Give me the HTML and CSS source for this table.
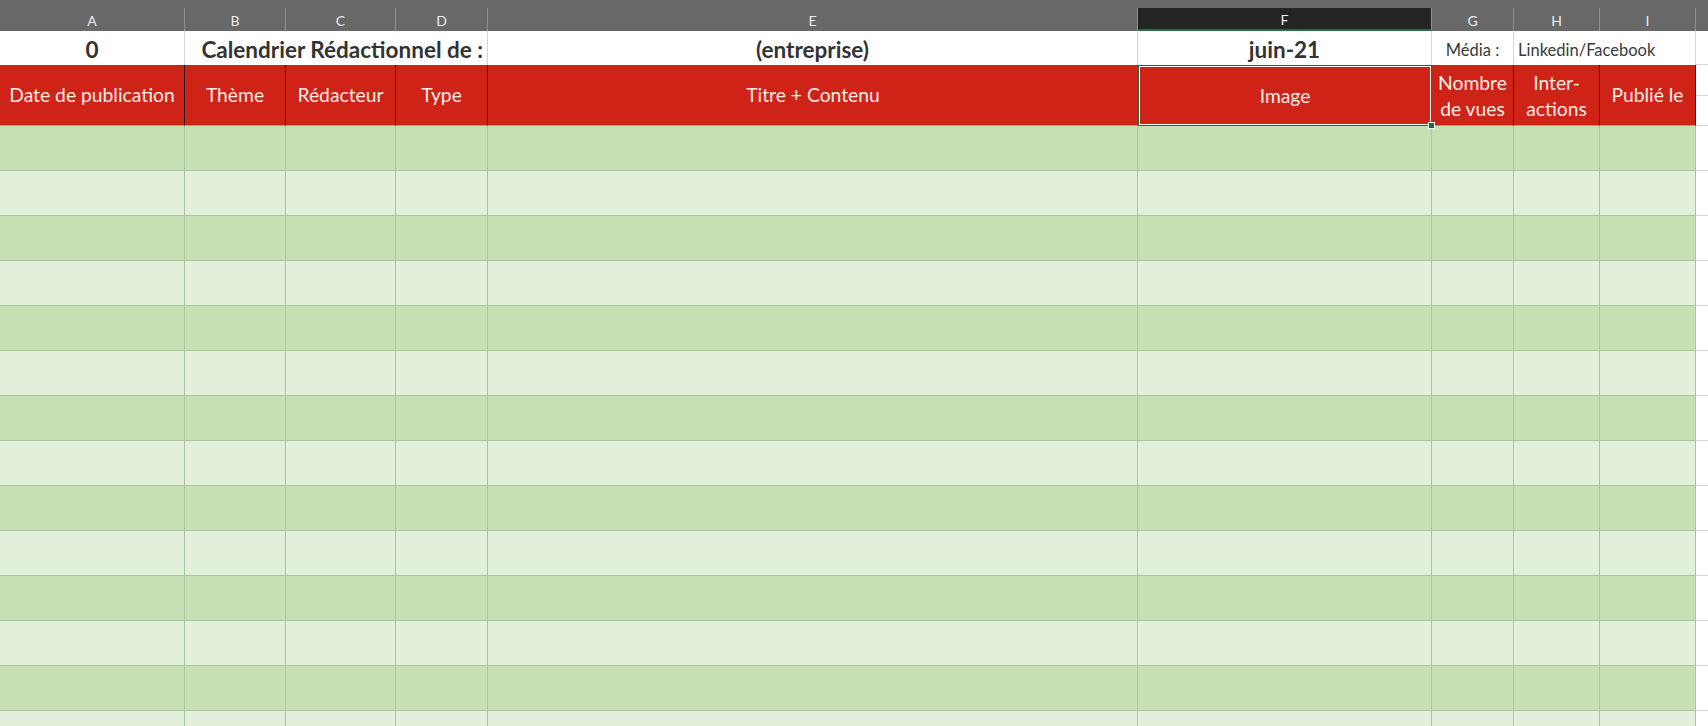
FILE: index.html
```html
<!DOCTYPE html>
<html lang="fr">
<head>
<meta charset="utf-8">
<title>Calendrier Rédactionnel</title>
<link rel="stylesheet" href="styles.css">
</head>
<body>
<div class="sheet">
  <div class="row colhead">
    <div class="ch">A</div>
    <div class="ch">B</div>
    <div class="ch">C</div>
    <div class="ch">D</div>
    <div class="ch">E</div>
    <div class="ch ch-sel">F</div>
    <div class="ch">G</div>
    <div class="ch">H</div>
    <div class="ch">I</div>
    <div class="ch ch-fill"></div>
  </div>

  <div class="row r1">
    <div class="c1 bold center">0</div>
    <div class="c1 bold right span3">Calendrier Rédactionnel de :</div>
    <div class="c1 bold center">(entreprise)</div>
    <div class="c1 bold center">juin-21</div>
    <div class="c1 small center">Média :</div>
    <div class="c1 small left span2">Linkedin/Facebook</div>
    <div class="c1 fill"></div>
  </div>

  <div class="row r2">
    <div class="hd">Date de publication</div>
    <div class="hd">Thème</div>
    <div class="hd">Rédacteur</div>
    <div class="hd">Type</div>
    <div class="hd hd-e">Titre + Contenu</div>
    <div class="hd hd-sel">Image<span class="handle"></span></div>
    <div class="hd two">Nombre<br>de vues</div>
    <div class="hd two">Inter-<br>actions</div>
    <div class="hd">Publié le</div>
    <div class="fill2"><div class="fl"></div><div class="fl"></div></div>
  </div>

  <div class="row data dark"><div></div><div></div><div></div><div></div><div></div><div></div><div></div><div></div><div></div><div class="fill"></div></div>
  <div class="row data light"><div></div><div></div><div></div><div></div><div></div><div></div><div></div><div></div><div></div><div class="fill"></div></div>
  <div class="row data dark"><div></div><div></div><div></div><div></div><div></div><div></div><div></div><div></div><div></div><div class="fill"></div></div>
  <div class="row data light"><div></div><div></div><div></div><div></div><div></div><div></div><div></div><div></div><div></div><div class="fill"></div></div>
  <div class="row data dark"><div></div><div></div><div></div><div></div><div></div><div></div><div></div><div></div><div></div><div class="fill"></div></div>
  <div class="row data light"><div></div><div></div><div></div><div></div><div></div><div></div><div></div><div></div><div></div><div class="fill"></div></div>
  <div class="row data dark"><div></div><div></div><div></div><div></div><div></div><div></div><div></div><div></div><div></div><div class="fill"></div></div>
  <div class="row data light"><div></div><div></div><div></div><div></div><div></div><div></div><div></div><div></div><div></div><div class="fill"></div></div>
  <div class="row data dark"><div></div><div></div><div></div><div></div><div></div><div></div><div></div><div></div><div></div><div class="fill"></div></div>
  <div class="row data light"><div></div><div></div><div></div><div></div><div></div><div></div><div></div><div></div><div></div><div class="fill"></div></div>
  <div class="row data dark"><div></div><div></div><div></div><div></div><div></div><div></div><div></div><div></div><div></div><div class="fill"></div></div>
  <div class="row data light"><div></div><div></div><div></div><div></div><div></div><div></div><div></div><div></div><div></div><div class="fill"></div></div>
  <div class="row data dark"><div></div><div></div><div></div><div></div><div></div><div></div><div></div><div></div><div></div><div class="fill"></div></div>
  <div class="row data light"><div></div><div></div><div></div><div></div><div></div><div></div><div></div><div></div><div></div><div class="fill"></div></div>
</div>
</body>
</html>
```

FILE: styles.css
```css
* { box-sizing: border-box; }
html, body {
  margin: 0;
  padding: 0;
  width: 1708px;
  height: 726px;
  overflow: hidden;
  background: #fff;
}
body {
  font-family: Lato, "Open Sans", sans-serif;
}
.sheet {
  display: flex;
  flex-direction: column;
  width: 1708px;
}
.row {
  display: grid;
  grid-template-columns: 185px 101px 110px 92px 650px 294px 82px 86px 96px 1fr;
}

/* column letters */
.colhead {
  height: 31px;
  padding-top: 8px;
  background: #686868;
}
.ch {
  border-right: 1px solid #8f8f8f;
  color: #ececec;
  font-size: 14px;
  display: flex;
  align-items: center;
  justify-content: center;
  padding-top: 1px;
}
.ch-sel {
  background: #242424;
  border-bottom: 2px solid #2a6b45;
  padding-top: 2px;
}
.ch-fill { border-right: none; }

/* row 1 */
.r1 {
  height: 34px;
}
.c1 {
  border-right: 1px solid #d6d6d6;
  display: flex;
  align-items: center;
  color: #333;
  white-space: nowrap;
  padding-top: 2px;
}
.bold {
  font-weight: 700;
  font-size: 22.5px;
}
.small {
  font-size: 16.5px;
  color: #3a3a3a;
  padding-top: 3px;
}
.center { justify-content: center; }
.right { justify-content: flex-end; padding-right: 4px; }
.left { justify-content: flex-start; padding-left: 4px; }
.span3 { grid-column: span 3; }
.span2 { grid-column: span 2; }
.r1 .fill {
  border-right: none;
  border-bottom: 1px solid #d6d6d6;
}

/* header row */
.r2 {
  height: 61px;
}
.hd {
  background: #d02318;
  color: #fdebe6;
  font-size: 19.3px;
  border-right: 1px solid #1c1c1c;
  border-bottom: 1px solid #9e9e9e;
  display: flex;
  align-items: center;
  justify-content: center;
  text-align: center;
  white-space: nowrap;
  line-height: 1.2;
}
.hd.two {
  line-height: 26px;
  padding-top: 1px;
}
.hd-e { border-right: none; }
.hd-sel {
  position: relative;
  z-index: 2;
  border: 1px solid #23663f;
  box-shadow: inset 0 0 0 1px #ffffff;
}
.handle {
  position: absolute;
  right: -4px;
  bottom: -4px;
  width: 7px;
  height: 7px;
  background: #23663f;
  border: 1px solid #ffffff;
}
.fill2 {
  display: flex;
  flex-direction: column;
}
.fl {
  flex: 1;
  border-bottom: 1px solid #d6d6d6;
}

/* data rows */
.data {
  height: 45px;
}
.data > div {
  border-right: 1px solid #a9c79b;
  border-bottom: 1px solid #a9c79b;
}
.dark > div { background: #c6e0b4; }
.light > div { background: #e2efda; }
.data > .fill {
  background: #ffffff;
  border-right: none;
  border-bottom: 1px solid #d6d6d6;
}
```
